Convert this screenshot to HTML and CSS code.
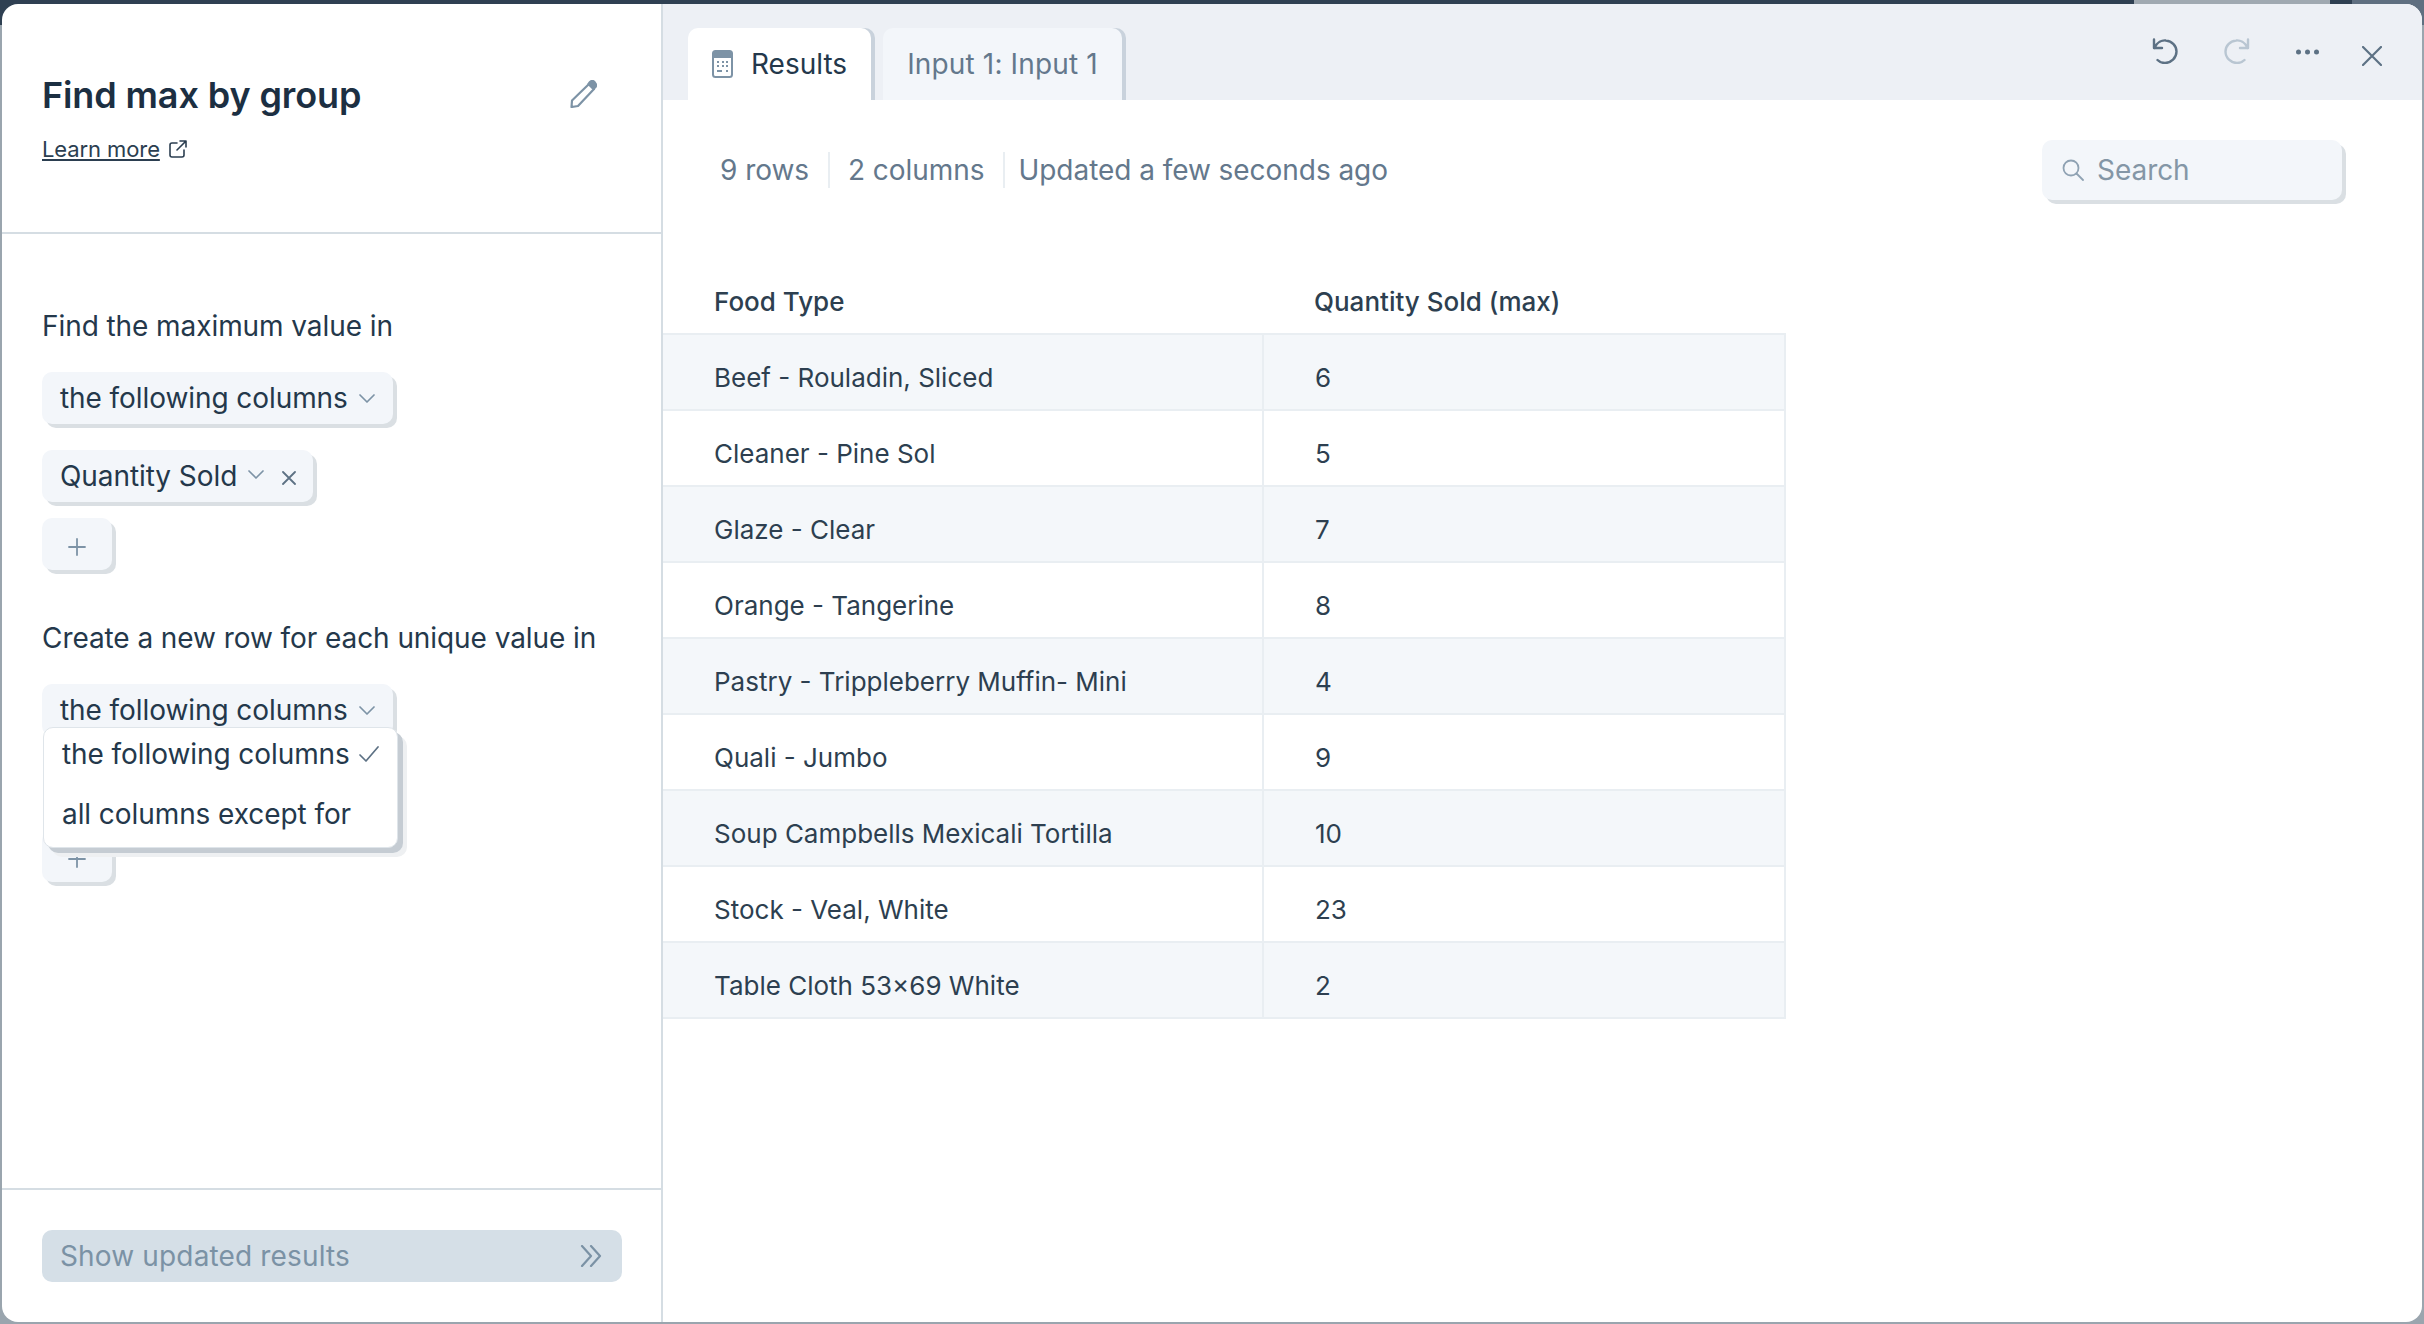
FILE: index.html
```html
<!DOCTYPE html>
<html lang="en">

<head>
    <meta charset="utf-8">
    <title>Find max by group</title>
    <link rel="stylesheet" href="styles.css">
</head>

<body>

    <div class="strip">
        <span class="strip-a"></span>
        <span class="strip-b"></span>
        <span class="strip-c"></span>
        <span class="strip-d"></span>
    </div>

    <div class="window">

        <aside class="side">
            <header class="side-head">
                <div class="title-row">
                    <h1>Find max by group</h1>
                    <svg class="pencil" viewBox="0 0 28 28" fill="none" stroke="#7d93a6" stroke-width="2.2" stroke-linejoin="round">
                        <path d="M20 4 L25 9 L9 26 L2.500 27 L3 20.500 Z" />
                        <path d="M21 2 C22.500 .5 24 .5 25.500 2 L26.500 3.500 C27.500 5 27.500 6 26 7.500 L24.500 9 L19.500 4 Z" fill="#7d93a6" />
                    </svg>
                </div>
                <a class="learn" href="#">
                    <span>Learn more</span>
                    <svg viewBox="0 0 18 18" fill="none" stroke="#2b3e50" stroke-width="1.600" stroke-linecap="round" stroke-linejoin="round">
                        <path d="M8 3 H3 Q1 3 1 5 V15 Q1 17 3 17 H13 Q15 17 15 15 V10" />
                        <path d="M8 10 L17 1 M11 1 H17 V7" />
                    </svg>
                </a>
            </header>

            <div class="side-body">
                <p class="label">Find the maximum value in</p>
                <button class="pill select">
                    the following columns
                    <svg class="chev" viewBox="0 0 16 9" fill="none" stroke="#7d93a6" stroke-width="1.700" stroke-linecap="round" stroke-linejoin="round"><path d="M1 1 L8 8 L15 1" /></svg>
                </button>
                <button class="pill chip">
                    <span>Quantity Sold</span>
                    <svg class="chev" viewBox="0 0 16 9" fill="none" stroke="#7d93a6" stroke-width="1.700" stroke-linecap="round" stroke-linejoin="round"><path d="M1 1 L8 8 L15 1" /></svg>
                    <svg class="remove" viewBox="0 0 14 14" fill="none" stroke="#5d7184" stroke-width="1.800" stroke-linecap="round"><path d="M1 1 L13 13 M13 1 L1 13" /></svg>
                </button>
                <button class="pill add">
                    <svg viewBox="0 0 18 18" fill="none" stroke="#7d93a6" stroke-width="1.800" stroke-linecap="round"><path d="M9 1 V17 M1 9 H17" /></svg>
                </button>

                <p class="label label-second">Create a new row for each unique value in</p>
                <div class="dropdown-wrap">
                    <button class="pill select">
                        the following columns
                        <svg class="chev" viewBox="0 0 16 9" fill="none" stroke="#7d93a6" stroke-width="1.700" stroke-linecap="round" stroke-linejoin="round"><path d="M1 1 L8 8 L15 1" /></svg>
                    </button>
                    <ul class="menu">
                        <li>
                            the following columns
                            <svg viewBox="0 0 20 16" fill="none" stroke="#5d7184" stroke-width="1.700" stroke-linecap="round" stroke-linejoin="round"><path d="M1 9 L7 15 L19 1" /></svg>
                        </li>
                        <li>all columns except for</li>
                    </ul>
                </div>
                <div class="pill chip chip-hidden"></div>
                <button class="pill add">
                    <svg viewBox="0 0 18 18" fill="none" stroke="#7d93a6" stroke-width="1.800" stroke-linecap="round"><path d="M9 1 V17 M1 9 H17" /></svg>
                </button>
            </div>

            <footer class="side-foot">
                <button class="show">
                    Show updated results
                    <svg viewBox="0 0 22 22" fill="none" stroke="#7b92a5" stroke-width="2.200" stroke-linecap="round" stroke-linejoin="round"><path d="M2 1 L11 11 L2 21 M11 1 L20 11 L11 21" /></svg>
                </button>
            </footer>
        </aside>

        <main class="results">
            <div class="tabbar">
                <div class="tab tab-active">
                    <svg viewBox="0 0 21 28">
                        <rect x="1" y="1" width="19" height="26" rx="2.500" fill="none" stroke="#7d93a6" stroke-width="2" />
                        <rect x="1" y="1" width="19" height="7" fill="#7d93a6" />
                        <path d="M5 12 H7 M10 12 H12 M14 12 H16 M5 16 H7 M10 16 H12 M14 16 H16 M5 21 H10 M14 21 H16" stroke="#7d93a6" stroke-width="2" />
                    </svg>
                    Results
                </div>
                <div class="tab tab-input">Input 1: Input 1</div>
                <div class="actions">
                    <svg class="act-undo" viewBox="0 0 26 26" fill="none" stroke="#5d7184" stroke-width="2.400" stroke-linecap="round" stroke-linejoin="round">
                        <path d="M2 1.500 V10 H10" />
                        <path d="M2.500 10 C5 4 10 2 14 2.500 C20 3 24.500 8 24.500 13.500 C24.500 20 19 25 13 25 C10 25 7.500 24 5.500 22" />
                    </svg>
                    <svg class="act-redo" viewBox="0 0 26 26" fill="none" stroke="#b9c6d2" stroke-width="2.400" stroke-linecap="round" stroke-linejoin="round">
                        <path d="M24 1.500 V10 H16" />
                        <path d="M23.500 10 C21 4 16 2 12 2.500 C6 3 1.500 8 1.500 13.500 C1.500 20 7 25 13 25 C16 25 18.500 24 20.500 22" />
                    </svg>
                    <svg class="act-more" viewBox="0 0 23 6" fill="#5d7184">
                        <circle cx="2.500" cy="3" r="2.500" />
                        <circle cx="11.500" cy="3" r="2.500" />
                        <circle cx="20.500" cy="3" r="2.500" />
                    </svg>
                    <svg class="act-close" viewBox="0 0 20 20" fill="none" stroke="#5d7184" stroke-width="2.200" stroke-linecap="round"><path d="M1 1 L19 19 M19 1 L1 19" /></svg>
                </div>
            </div>

            <div class="stats">
                <span>9 rows</span>
                <span>2 columns</span>
                <span>Updated a few seconds ago</span>
                <div class="search">
                    <svg viewBox="0 0 22 22" fill="none" stroke="#8fa2b3" stroke-width="1.800" stroke-linecap="round">
                        <circle cx="9" cy="9" r="7.500" />
                        <path d="M14.500 14.500 L21 21" />
                    </svg>
                    Search
                </div>
            </div>

            <table>
                <thead>
                    <tr>
                        <th>Food Type</th>
                        <th>Quantity Sold (max)</th>
                    </tr>
                </thead>
                <tbody>
                    <tr><td>Beef - Rouladin, Sliced</td><td>6</td></tr>
                    <tr><td>Cleaner - Pine Sol</td><td>5</td></tr>
                    <tr><td>Glaze - Clear</td><td>7</td></tr>
                    <tr><td>Orange - Tangerine</td><td>8</td></tr>
                    <tr><td>Pastry - Trippleberry Muffin- Mini</td><td>4</td></tr>
                    <tr><td>Quali - Jumbo</td><td>9</td></tr>
                    <tr><td>Soup Campbells Mexicali Tortilla</td><td>10</td></tr>
                    <tr><td>Stock - Veal, White</td><td>23</td></tr>
                    <tr><td>Table Cloth 53×69 White</td><td>2</td></tr>
                </tbody>
            </table>
        </main>

    </div>

</body>

</html>
```

FILE: styles.css
```css
* {
    box-sizing: border-box;
}

html,
body {
    height: 100%;
}

body {
    margin: 0;
    background: linear-gradient(to right, #2f4052 50%, #5f6f80 50%) 0 0 / 100% 25px no-repeat, #9aa5ae;
    font-family: "Inter", "Liberation Sans", sans-serif;
    color: #24384b;
    overflow: hidden;
}

/* strip of the page behind the modal */
.strip {
    display: flex;
    height: 4px;
}

.strip-a {
    width: 2134px;
    background-color: #2f4052;
}

.strip-b {
    width: 196px;
    background-color: #a0a9b1;
}

.strip-c {
    width: 22px;
    background-color: #2f4052;
}

.strip-d {
    flex: 1;
    background-color: #5f6f80;
}

.window {
    display: flex;
    height: 1318px;
    margin: 0 2px;
    background-color: #fff;
    border-radius: 16px;
    overflow: hidden;
}

/* left panel */
.side {
    display: flex;
    flex-direction: column;
    width: 661px;
    border-right: 2px solid #d5dde3;
}

.side-head {
    height: 230px;
    padding: 68px 40px 0;
    border-bottom: 2px solid #d5dde3;
}

.title-row {
    display: flex;
    align-items: center;
    justify-content: space-between;
    padding-right: 24px;
    height: 46px;
}

h1 {
    margin: 0;
    font-size: 36px;
    font-weight: 600;
    letter-spacing: -0.12px;
    color: #1c2f42;
}

.pencil {
    width: 28px;
    height: 28px;
    margin-top: -2px;
}

.learn {
    display: inline-flex;
    align-items: center;
    gap: 9px;
    margin-top: 18px;
    font-size: 22px;
    letter-spacing: -0.1px;
    color: #2b3e50;
}

.learn svg {
    width: 18px;
    height: 18px;
}

.side-body {
    flex: 1;
    padding: 74px 40px 0;
}

.label {
    margin: 0 0 28px;
    font-size: 28px;
    line-height: 36px;
    letter-spacing: -0.075px;
    white-space: nowrap;
}

.label-second {
    margin-top: 50px;
}

.pill {
    display: flex;
    align-items: center;
    height: 52px;
    padding: 0 18px;
    border: 0;
    border-radius: 10px;
    background-color: #f3f6fa;
    box-shadow: 4px 4px 0 #dadfe3;
    font-family: inherit;
    font-size: 28px;
    letter-spacing: -0.075px;
    color: #24384b;
    white-space: nowrap;
}

.select {
    width: 351px;
    justify-content: space-between;
}

.chev {
    width: 16px;
    height: 9px;
    flex-shrink: 0;
}

.chip {
    margin-top: 26px;
    width: 271px;
    padding-right: 0;
}

.chip .chev {
    margin-left: 11px;
    margin-top: -4px;
}

.remove {
    width: 14px;
    height: 14px;
    margin-left: 18px;
    margin-top: 4px;
    flex-shrink: 0;
}

.chip-hidden {
    visibility: hidden;
}

.add {
    margin-top: 16px;
    width: 70px;
    padding: 0 0 0 26px;
}

.add svg {
    width: 18px;
    height: 18px;
    margin-top: 5px;
}

/* open dropdown */
.dropdown-wrap {
    position: relative;
}

.menu {
    position: absolute;
    z-index: 2;
    top: 43px;
    left: 1px;
    width: 355px;
    height: 121px;
    margin: 0;
    padding: 0;
    list-style: none;
    background-color: #fff;
    border: 1px solid #dfe5ea;
    border-radius: 10px;
    box-shadow: 5px 5px 0 #c5ccd3, 9px 9px 0 #eef0f2;
}

.menu li {
    display: flex;
    align-items: center;
    justify-content: space-between;
    height: 60px;
    padding: 0 18px 8px 18px;
    font-size: 28px;
    letter-spacing: -0.075px;
}

.menu svg {
    width: 20px;
    height: 16px;
}

/* footer of the left panel */
.side-foot {
    height: 134px;
    padding: 40px 40px 0;
    border-top: 2px solid #d5dde3;
}

.show {
    display: flex;
    align-items: center;
    justify-content: space-between;
    width: 580px;
    height: 52px;
    padding: 0 20px 0 18px;
    border: 0;
    border-radius: 10px;
    background-color: #d5dfe7;
    font-family: inherit;
    font-size: 28px;
    letter-spacing: 0.15px;
    color: #7b92a5;
}

.show svg {
    width: 22px;
    height: 22px;
}

/* right panel */
.results {
    flex: 1;
}

.tabbar {
    display: flex;
    align-items: flex-end;
    height: 96px;
    padding-left: 25px;
    background-color: #edf0f5;
}

.tab {
    display: flex;
    align-items: center;
    height: 72px;
    padding: 0 24px;
    margin-right: 16px;
    border-radius: 10px 10px 0 0;
    background-color: #f3f6fa;
    box-shadow: 4px 0 0 #c9d2dc;
    font-size: 28px;
    color: #64788c;
}

.tab-active {
    gap: 18px;
    margin-right: 12px;
    background-color: #fff;
    color: #24384b;
}

.tab-input {
    letter-spacing: 0.15px;
}

.tab svg {
    width: 21px;
    height: 28px;
}

.actions {
    position: relative;
    flex: 1;
    align-self: stretch;
}

.actions svg {
    position: absolute;
}

.act-undo {
    top: 34px;
    right: 244px;
    width: 26px;
    height: 26px;
}

.act-redo {
    top: 34px;
    right: 172px;
    width: 26px;
    height: 26px;
}

.act-more {
    top: 45px;
    right: 103px;
    width: 23px;
    height: 6px;
}

.act-close {
    top: 42px;
    right: 40px;
    width: 20px;
    height: 20px;
}

.stats {
    display: flex;
    align-items: center;
    height: 60px;
    margin-top: 40px;
    padding: 0 80px 0 57px;
    font-size: 28px;
    letter-spacing: -0.05px;
    color: #64788c;
}

.stats > span {
    line-height: 36px;
    padding-right: 19px;
    margin-right: 18px;
    border-right: 2px solid #e9eef2;
}

.stats > span:nth-child(2) {
    margin-right: 13px;
}

.stats > span:nth-child(3) {
    border-right: 0;
}

.search {
    display: flex;
    align-items: center;
    gap: 13px;
    width: 300px;
    height: 60px;
    margin-left: auto;
    padding-left: 20px;
    border-radius: 10px;
    background-color: #f3f6fa;
    box-shadow: 4px 4px 0 #dadfe3;
    color: #8496a6;
}

.search svg {
    width: 22px;
    height: 22px;
}

table {
    width: 1123px;
    border-collapse: collapse;
    table-layout: fixed;
    font-size: 26px;
    color: #2d3f50;
}

th {
    height: 134px;
    padding: 70px 0 0 51px;
    text-align: left;
    font-weight: 500;
}

th:first-child {
    width: 600px;
}

td {
    height: 76px;
    padding: 10px 0 0 51px;
    border: 2px solid #e9eef2;
}

td:first-child {
    border-left: 0;
}

tbody tr:nth-child(odd) {
    background-color: #f4f7fa;
}
```
